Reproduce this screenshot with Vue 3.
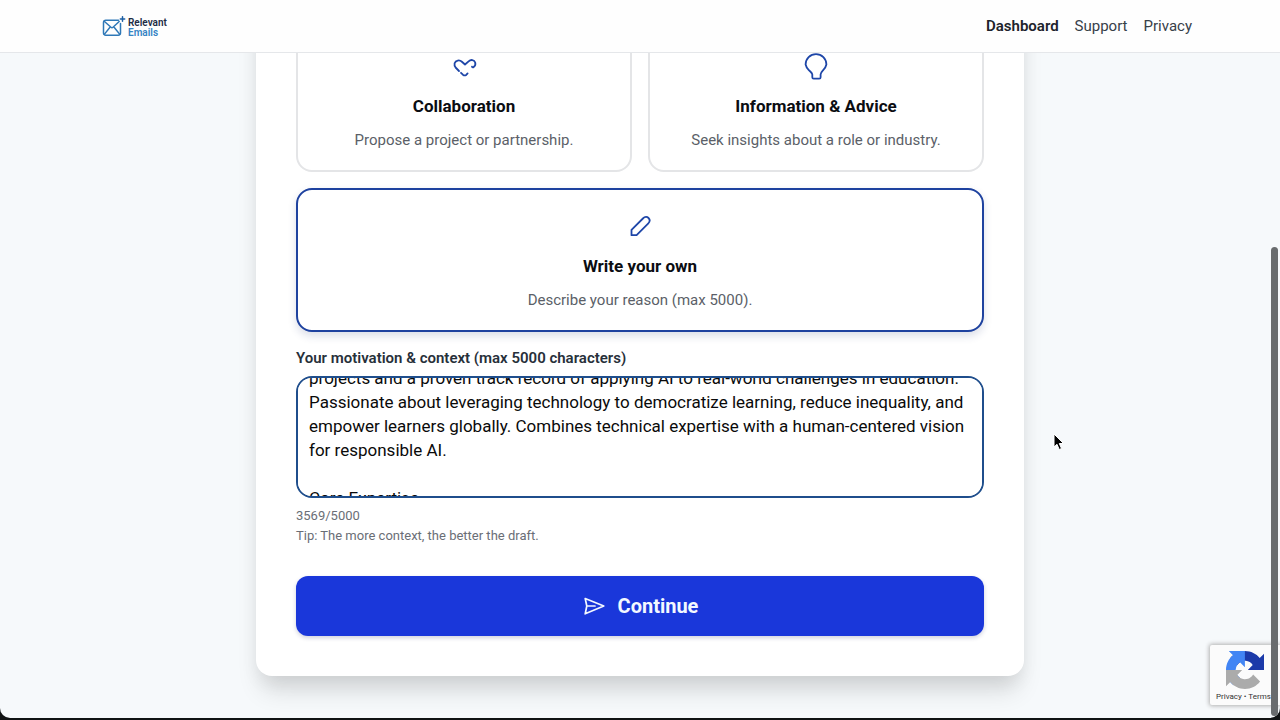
<script setup>
import { onMounted, ref } from 'vue'

const reasons = [
  { id: 'collaboration', title: 'Collaboration', text: 'Propose a project or partnership.' },
  { id: 'advice', title: 'Information & Advice', text: 'Seek insights about a role or industry.' },
  { id: 'own', title: 'Write your own', text: 'Describe your reason (max 5000).' }
]
const selected = ref('own')
const box = ref(null)
const motivation = ref(
  [
    'projects and a proven track record of applying AI to real-world challenges in education.',
    'Passionate about leveraging technology to democratize learning, reduce inequality, and',
    'empower learners globally. Combines technical expertise with a human-centered vision',
    'for responsible AI.',
    '',
    'Core Expertise'
  ].join('\n')
)

onMounted(() => {
  box.value.scrollTop = 24
})
</script>

<template>
  <div class="window">
    <header class="topbar">
      <a class="brand" href="#" aria-label="Relevant Emails">
        <svg class="brand-mark" viewBox="0 0 24 24" fill="none" stroke="#2f78b7" stroke-width="1.5" stroke-linecap="round" stroke-linejoin="round">
          <path d="M16.500 6.200H3.700A2.200 2.200 0 0 0 1.500 8.400V19A2.200 2.200 0 0 0 3.700 21.200H16.300A2.200 2.200 0 0 0 18.500 19V9.500" />
          <path d="M2.200 7.200 9 13.300q1 .9 2 0L17.200 7.500M2.300 20.400 7.800 13.500M17.800 20.400 12.300 13.500" />
          <path d="M20.500 2.800v4.400M18.300 5h4.400" stroke="#1d5fa3" />
        </svg>
        <span class="brand-name"><span>Relevant</span><span class="brand-sub">Emails</span></span>
      </a>
      <nav class="nav">
        <a class="active" href="#">Dashboard</a>
        <a href="#">Support</a>
        <a href="#">Privacy</a>
      </nav>
    </header>

    <main class="page">
      <form class="panel" @submit.prevent>
        <div class="reasons">
          <button
            v-for="r in reasons"
            :key="r.id"
            type="button"
            class="reason"
            :class="{ selected: selected === r.id, wide: r.id === 'own' }"
            @click="selected = r.id"
          >
            <svg class="icon" viewBox="0 0 24 24" fill="none" stroke="currentColor" stroke-width="1.8" stroke-linecap="round" stroke-linejoin="round">
              <path v-if="r.id === 'collaboration'" d="M7 17 3.600 13.500A5 5 0 0 1 2.600 9.300C3.700 6.100 7.500 5.600 9.900 7.700L13 10.500 16.600 7.300C18.800 5.300 22.200 5.600 23.200 8.500C23.800 10.500 22.800 12.300 21.400 13.300Q20.300 13.500 20 12.700M9 18.800 10.900 20.700Q12.600 22 14.200 20.900L15.600 19.400" />
              <path v-else-if="r.id === 'advice'" d="M8.300 22.500V20.600C8.300 18.700 6.600 18 4.600 15.800A10.500 10.500 0 0 1 1.600 10.500A10.400 10.400 0 0 1 22.400 10.500A10.500 10.500 0 0 1 19.400 15.800C17.400 18 16.600 18.700 16.600 20.600V23.300Q16.600 24.700 15.200 24.700H9.700Q8.300 24.700 8.300 23.300Z" />
              <path v-else d="M3.500 21.200V15.900L14.900 4.500C17 2.400 19.200 2.700 20.500 4C21.900 5.400 22 7.700 20.100 9.600L8.600 21.100Z" />
            </svg>
            <span class="reason-title">{{ r.title }}</span>
            <span class="reason-text">{{ r.text }}</span>
          </button>
        </div>

        <label class="label" for="motivation">Your motivation &amp; context (max 5000 characters)</label>
        <textarea id="motivation" ref="box" v-model="motivation" class="field" spellcheck="false"></textarea>
        <p class="hint">3569/5000</p>
        <p class="hint">Tip: The more context, the better the draft.</p>

        <button class="submit" type="submit">
          <svg class="send" viewBox="0 0 24 24" fill="none" stroke="currentColor" stroke-width="1.7" stroke-linecap="round" stroke-linejoin="round">
            <path d="M3.200 4.500 21.800 12 3.200 19.800 4.800 12ZM4.800 12H13" />
          </svg>
          <span>Continue</span>
        </button>
      </form>
    </main>

    <aside class="captcha">
      <svg class="captcha-mark" viewBox="0 0 64 64">
        <path fill="#1c3aa9" d="M64 31.955l-.033-1.370V4.687l-7.160 7.160C50.948 4.674 42.033.093 32.050.093c-10.400 0-19.622 4.960-25.458 12.640l11.736 11.860a15.550 15.550 0 0 1 4.754-5.334c2.050-1.600 4.952-2.906 8.968-2.906.485 0 .860.057 1.135.163 4.976.393 9.288 3.140 11.828 7.124l-8.307 8.307L64 31.953" />
        <path fill="#4285f4" d="M31.862.094l-1.370.033H4.594l7.160 7.160C4.580 13.147 0 22.060 0 32.046c0 10.400 4.960 19.622 12.640 25.458L24.500 45.768a15.550 15.550 0 0 1-5.334-4.754c-1.600-2.050-2.906-4.952-2.906-8.968 0-.485.057-.860.163-1.135.393-4.976 3.140-9.288 7.124-11.828l8.307 8.307L31.860.095" />
        <path fill="#ababab" d="M.001 32.045l.033 1.370v25.898l7.160-7.160c5.860 7.173 14.774 11.754 24.760 11.754 10.400 0 19.622-4.960 25.458-12.640l-11.736-11.860a15.550 15.550 0 0 1-4.754 5.334c-2.050 1.600-4.952 2.906-8.968 2.906-.485 0-.860-.057-1.135-.163-4.976-.393-9.288-3.140-11.828-7.124l8.307-8.307c-10.522.040-22.400.066-27.295-.005" />
      </svg>
      <span class="captcha-links"><a href="#">Privacy</a> • <a href="#">Terms</a></span>
    </aside>
    <div class="thumb"></div>
    <svg class="cursor" viewBox="0 0 12 18">
      <path d="M1 1V14L4 11.300 6.200 16.500 8.500 15.500 6.300 10.500H10.500Z" fill="#000" stroke="#fff" stroke-width="1" />
    </svg>
  </div>
</template>

<style>
body {
  background: #101314;
}
</style>

<style scoped>
.window {
  position: relative;
  box-sizing: border-box;
  height: calc(100vh - 2px);
  overflow: hidden;
  border-radius: 0 0 10px 10px;
  background: #f6f9fb;
  display: flex;
  flex-direction: column;
  font-family: Roboto, "Liberation Sans", sans-serif;
  color: #27303a;
}
.topbar {
  position: relative;
  z-index: 2;
  flex: none;
  display: flex;
  align-items: center;
  justify-content: space-between;
  height: 52px;
  padding: 0 88px 0 102px;
  background: #fefefe;
  border-bottom: 1px solid #e5e7ea;
}
.brand {
  display: flex;
  align-items: center;
  gap: 2px;
  text-decoration: none;
  color: #1d2b44;
}
.brand-mark {
  width: 24px;
  height: 24px;
}
.brand-name {
  display: flex;
  flex-direction: column;
  font-size: 10px;
  font-weight: 600;
  line-height: 10px;
  padding-top: 4px;
}
.brand-sub {
  color: #3583c4;
}
.nav {
  display: flex;
  gap: 16px;
  font-size: 15px;
  line-height: 20px;
}
.nav a {
  color: #374049;
  text-decoration: none;
}
.nav .active {
  color: #1d232b;
  font-weight: 600;
}
.page {
  flex: 1;
  min-height: 0;
  display: flex;
  flex-direction: column;
  justify-content: flex-end;
  align-items: center;
  padding-bottom: 42px;
}
.panel {
  flex: none;
  box-sizing: border-box;
  width: 60%;
  padding: 80px 40px 40px;
  border-radius: 16px;
  background: #fff;
  box-shadow: 0 20px 25px -5px rgba(0, 0, 0, 0.12), 0 8px 20px -4px rgba(0, 0, 0, 0.08);
  display: flex;
  flex-direction: column;
}
.reasons {
  display: grid;
  grid-template-columns: 1fr 1fr;
  gap: 16px;
  margin-bottom: 16px;
}
.reason {
  display: flex;
  flex-direction: column;
  align-items: center;
  padding: 24px 20px 20px;
  border: 2px solid #e4e5e7;
  border-radius: 16px;
  background: #fff;
  font-family: inherit;
  color: #0b0d12;
}
.reason.wide {
  grid-column: 1 / -1;
}
.reason.selected {
  border-color: #1e429f;
  box-shadow: 0 4px 8px rgba(30, 50, 110, 0.16);
}
.icon {
  width: 24px;
  height: 24px;
  overflow: visible;
  color: #1e46a8;
}
.reason-title {
  margin-top: 16px;
  font-size: 17px;
  font-weight: 700;
  line-height: 24px;
}
.reason-text {
  margin-top: 12px;
  font-size: 15px;
  line-height: 20px;
  color: #5b5f68;
}
.label {
  font-size: 15px;
  font-weight: 600;
  line-height: 20px;
  margin-bottom: 8px;
}
.field {
  box-sizing: border-box;
  width: 100%;
  height: 122px;
  margin: 0 0 8px;
  padding: 12px 11px;
  border: 2px solid #1f4e8c;
  border-radius: 16px;
  outline: none;
  background: #fff;
  color: #0a0a0a;
  font-family: inherit;
  font-size: 17px;
  line-height: 24px;
  resize: none;
  scrollbar-width: none;
}
.hint {
  margin: 0;
  font-size: 13px;
  line-height: 20px;
  color: #6a6e76;
}
.submit {
  display: flex;
  align-items: center;
  justify-content: center;
  gap: 12px;
  height: 60px;
  margin-top: 30px;
  border: 0;
  border-radius: 12px;
  background: #1a37da;
  box-shadow: 0 2px 4px rgba(20, 30, 90, 0.2);
  color: #f3f8ff;
  font-family: inherit;
  font-size: 20px;
  font-weight: 700;
  line-height: 24px;
}
.send {
  width: 24px;
  height: 24px;
}
.captcha {
  position: absolute;
  z-index: 3;
  right: 0;
  bottom: 13px;
  box-sizing: border-box;
  width: 70px;
  height: 60px;
  padding: 6px 0 0 6px;
  border-radius: 2px 0 0 2px;
  background: #fbfbfb;
  box-shadow: 0 0 4px 1px #b0b0b0;
  white-space: nowrap;
}
.captcha-mark {
  display: block;
  width: 38px;
  height: 38px;
  margin: 0 0 3px 10px;
}
.captcha-links {
  display: block;
  font-size: 8px;
  line-height: 10px;
  color: #333;
}
.captcha-links a {
  color: inherit;
  text-decoration: none;
}
.thumb {
  position: absolute;
  z-index: 4;
  right: 2px;
  top: 247px;
  bottom: 2px;
  width: 7px;
  border-radius: 4px;
  background: #696c6e;
}
.cursor {
  position: absolute;
  z-index: 5;
  left: 1053px;
  top: 433px;
  width: 12px;
  height: 18px;
}
</style>
